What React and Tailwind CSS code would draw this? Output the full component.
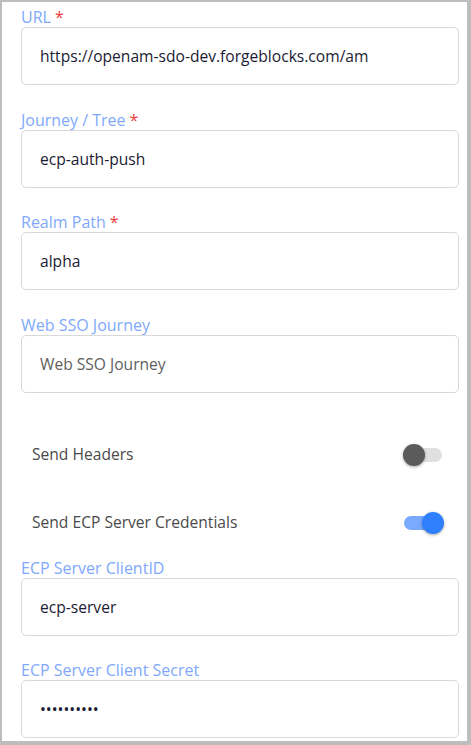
import React from 'react';

const font = { fontFamily: '"Open Sans", "Noto Sans", sans-serif' };

// Text field with label above
const Field = ({ label, required, value, placeholder, type = 'text' }) => (
  <div className="mb-[24.7px]">
    <div className="h-[20px] text-[16px] leading-[20px] text-[#80a9fc]">
      {label}
      {required && <span className="ml-[4px] text-[#f03c3c]">*</span>}
    </div>
    <input
      type={type}
      readOnly
      value={value}
      placeholder={placeholder}
      className="block h-[58px] w-[438px] rounded-[5px] border border-[#d9d9d9] bg-white px-[18px] text-[15.6px] text-[#1b1b33] placeholder:text-[#5e5e5e] outline-none"
      style={font}
    />
  </div>
);

const Toggle = ({ label, on }) => (
  <div className="flex h-[68px] items-center justify-between pl-[11px] pr-[14px]">
    <span className="text-[15.6px] text-[#4a4a4a]">{label}</span>
    <div className="relative h-[22px] w-[42px]">
      <div
        className={`absolute left-[1px] top-[4px] h-[14px] w-[38px] rounded-full ${on ? 'bg-[#7aaaff]' : 'bg-[#e0e0e0]'}`}
      />
      <div
        className={`absolute top-[0px] h-[22px] w-[22px] rounded-full shadow-[0_1px_3px_rgba(0,0,0,0.35)] ${on ? 'left-[19px] bg-[#2f80ff]' : 'left-0 bg-[#5b5b5b]'}`}
      />
    </div>
  </div>
);

export default function App() {
  return (
    <div className="h-[745px] w-[471px] bg-[#bdbdbd] pb-[4px] pl-[2px] pr-[4px] pt-[2px]" style={font}>
      <div className="h-full overflow-hidden bg-white pl-[19px] pt-[5px]">
        <Field label="URL" required value="https://openam-sdo-dev.forgeblocks.com/am" />
        <Field label="Journey / Tree" required value="ecp-auth-push" />
        <Field label="Realm Path" required value="alpha" />
        <Field label="Web SSO Journey" value="" placeholder="Web SSO Journey" />
        <div className="w-[438px] pb-[1px] pt-[3px]">
          <Toggle label="Send Headers" on={false} />
          <Toggle label="Send ECP Server Credentials" on />
        </div>
        <Field label="ECP Server ClientID" value="ecp-server" />
        <Field label="ECP Server Client Secret" type="password" value="ecpsecret1" />
      </div>
    </div>
  );
}
